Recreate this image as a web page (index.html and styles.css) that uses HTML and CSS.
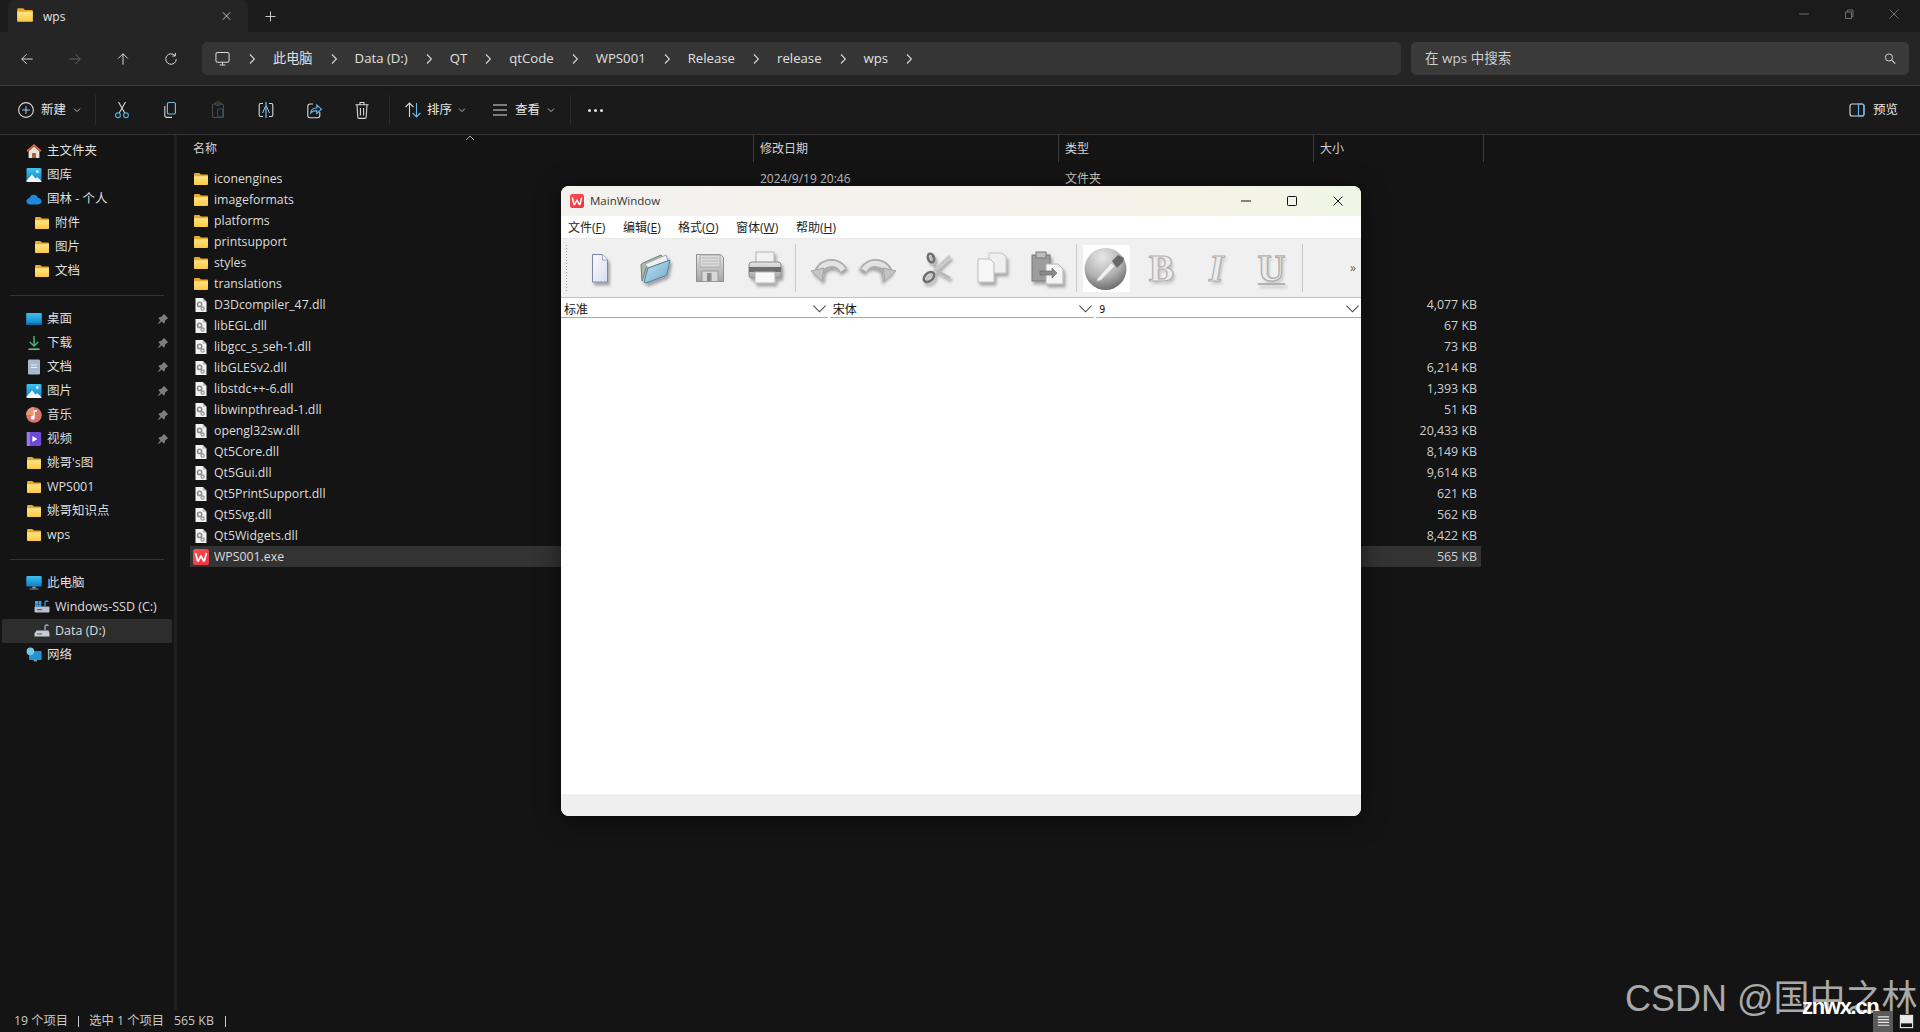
FILE: index.html
```html
<!DOCTYPE html>
<html lang="zh-CN">
<head>
<meta charset="utf-8">
<title>wps</title>
<link rel="stylesheet" href="styles.css">
</head>
<body>
<svg class="defs" width="0" height="0" aria-hidden="true">
  <defs>
    <linearGradient id="gFolder" x1="0" y1="0" x2="0" y2="1"><stop offset="0" stop-color="#ffe48a"/><stop offset="1" stop-color="#fcc93f"/></linearGradient>
    <linearGradient id="gBlue" x1="0" y1="0" x2="0" y2="1"><stop offset="0" stop-color="#3fc1f0"/><stop offset="1" stop-color="#0f7fc4"/></linearGradient>
    <linearGradient id="gWps" x1="0" y1="0" x2="1" y2="1"><stop offset="0" stop-color="#f9534f"/><stop offset="1" stop-color="#ee3045"/></linearGradient>
    <linearGradient id="gGrey" x1="0" y1="0" x2="0" y2="1"><stop offset="0" stop-color="#e6e6e6"/><stop offset="1" stop-color="#a4a4a4"/></linearGradient>
    <linearGradient id="gPage" x1="0" y1="0" x2="1" y2="1"><stop offset="0" stop-color="#fbfbff"/><stop offset="1" stop-color="#d8dcf0"/></linearGradient>
    <linearGradient id="gOpen" x1="0" y1="0" x2="1" y2="1"><stop offset="0" stop-color="#c6e4ee"/><stop offset="1" stop-color="#6aa8cf"/></linearGradient>
    <radialGradient id="gSphere" cx=".42" cy=".22" r=".85"><stop offset="0" stop-color="#e8e8e8"/><stop offset=".55" stop-color="#b2b2b2"/><stop offset="1" stop-color="#5f5f5f"/></radialGradient>
    <filter id="fShadow" x="-30%" y="-30%" width="160%" height="170%"><feDropShadow dx="2" dy="3" stdDeviation="1.6" flood-color="#000" flood-opacity=".32"/></filter>

    <symbol id="i-folder" viewBox="0 0 16 16"><path d="M1 3.2C1 2.5 1.5 2 2.2 2h3.6c.4 0 .7.1 1 .4L8 3.6h6c.6 0 1 .4 1 1V6H1z" fill="#e9a92a"/><path d="M1 5.2h14V13c0 .6-.4 1-1 1H2c-.6 0-1-.4-1-1z" fill="url(#gFolder)"/></symbol>
    <symbol id="i-dll" viewBox="0 0 16 16"><path d="M2.5 1h7.3L13.5 4.7V15h-11z" fill="#f2f2f2"/><path d="M9.8 1v3.7h3.7z" fill="#bdbdbd"/><circle cx="6.6" cy="7.4" r="2.1" fill="none" stroke="#8b8b8b" stroke-width="1.5"/><circle cx="9.6" cy="11.6" r="1.6" fill="none" stroke="#9a9a9a" stroke-width="1.3"/></symbol>
    <symbol id="i-wps" viewBox="0 0 16 16"><rect width="16" height="16" rx="2.6" fill="url(#gWps)"/><path d="M2.6 4l1.9 7.6c.2.6.8.6 1 .1L8 7l2.5 4.7c.2.5.8.5 1-.1L13.4 4" fill="none" stroke="#fff" stroke-width="1.7" stroke-linejoin="round"/></symbol>
    <symbol id="i-home" viewBox="0 0 16 16"><path d="M8 1L.5 7.6l1.1 1.1L8 3.2l6.4 5.5 1.1-1.1z" fill="#e8633d"/><path d="M2.6 8.2L8 3.6l5.4 4.6V15H10v-4.6H6V15H2.6z" fill="#e8e4dc"/><rect x="6" y="10.4" width="4" height="4.6" fill="#a8643c"/></symbol>
    <symbol id="i-pics" viewBox="0 0 16 16"><rect x=".5" y="1" width="15" height="14" rx="1.4" fill="url(#gBlue)"/><path d="M.5 13.6L6 7.4l3.6 4 1.6-1.4 4.3 4.2v.4c0 .3-.3.4-.6.4H1.4c-.5 0-.9-.2-.9-1.4z" fill="#f4f8fc"/><circle cx="11.4" cy="4.6" r="1.3" fill="#fff"/></symbol>
    <symbol id="i-cloud" viewBox="0 0 16 16"><path d="M4 13.4C2 13.4.4 12 .4 10.2S2 7 3.6 7c.6-2 2.3-3.2 4.2-3.2 2.1 0 3.8 1.3 4.3 3.3 1.9.1 3.5 1.4 3.5 3.2s-1.5 3.1-3.5 3.1z" fill="#1f87dd"/></symbol>
    <symbol id="i-desk" viewBox="0 0 16 16"><rect x=".2" y="2" width="15.6" height="12" rx="1" fill="url(#gBlue)"/><rect x=".2" y="12" width="15.6" height="2" fill="#0c6aa8"/></symbol>
    <symbol id="i-down" viewBox="0 0 16 16"><path d="M8 1v9.6M3.8 7L8 11l4.2-4" fill="none" stroke="#3fb37f" stroke-width="1.5"/><path d="M2.5 14.2h11" stroke="#6fc6a0" stroke-width="1.5"/></symbol>
    <symbol id="i-docs" viewBox="0 0 16 16"><rect x="2" y="0.5" width="12" height="15" rx="1.2" fill="#a9b8cc"/><rect x="5" y="5.5" width="6" height="1" fill="#e8eef6"/><rect x="5" y="8" width="6" height="1" fill="#e8eef6"/></symbol>
    <symbol id="i-music" viewBox="0 0 16 16"><circle cx="8" cy="8" r="7.8" fill="#d9756a"/><path d="M0 8a8 8 0 0 1 8-8v8z" fill="#e79a6f"/><path d="M7.6 3.6l3.4-.8v1.6l-2.2.5V10.6a2 2 0 1 1-1.2-1.8z" fill="#fff"/></symbol>
    <symbol id="i-video" viewBox="0 0 16 16"><rect x=".8" y="1" width="14.4" height="14" rx="1.4" fill="#6c4bd6"/><rect x=".8" y="1" width="3" height="14" fill="#9a7be8"/><path d="M6.4 5l5 3-5 3z" fill="#fff"/></symbol>
    <symbol id="i-pc" viewBox="0 0 16 16"><rect x=".3" y="1" width="15.4" height="10.6" rx="1" fill="url(#gBlue)"/><rect x="6.4" y="11.6" width="3.2" height="2" fill="#8d99a6"/><rect x="3.6" y="13.4" width="8.8" height="1.2" fill="#6f7b88"/></symbol>
    <symbol id="i-win" viewBox="0 0 16 16"><rect x=".5" y="7.5" width="15" height="6" rx="1" fill="#b9c2cc"/><rect x="1" y="2" width="3" height="3" fill="#37a0ea"/><rect x="4.4" y="2" width="3" height="3" fill="#37a0ea"/><rect x="1" y="5.2" width="3" height="2.6" fill="#37a0ea"/><rect x="4.4" y="5.2" width="3" height="2.6" fill="#37a0ea"/><rect x="3" y="10" width="5" height="1.2" fill="#55606c"/><path d="M11 7V3.4a1.7 1.7 0 0 1 3.3-.4" fill="none" stroke="#4aa4e0" stroke-width="1.2"/></symbol>
    <symbol id="i-drive" viewBox="0 0 16 16"><path d="M2.5 7.5h12l1 3V13.5H.5v-3z" fill="#c6ccd2"/><rect x="3" y="10.4" width="5" height="1.1" fill="#55606c"/><path d="M11 7V3.4a1.7 1.7 0 0 1 3.3-.4" fill="none" stroke="#b4bcc4" stroke-width="1.2"/></symbol>
    <symbol id="i-net" viewBox="0 0 16 16"><rect x="3" y="4" width="12.6" height="9" rx="1" fill="#1f93d3"/><rect x="7.6" y="13" width="3.4" height="1.4" fill="#8d99a6"/><circle cx="4.4" cy="4.4" r="3.8" fill="#74c6ec"/></symbol>
    <symbol id="i-pin" viewBox="0 0 12 12"><path d="M6.8.8l4.4 4.4-1 .5-2.2 2.1-.3 2.2-1 .6-1.9-2L1.6 11 1 10.4l2.4-3.2L1.5 5.3l.6-1 2.2-.3L6.3 1.8z" fill="#7e7e7e"/></symbol>
    <symbol id="i-chev" viewBox="0 0 8 12"><path d="M2 1.5L6.4 6 2 10.5" fill="none" stroke="#d8d8d8" stroke-width="1.1"/></symbol>
    <symbol id="i-down-small" viewBox="0 0 8 8"><path d="M1 2.6L4 5.6 7 2.6" fill="none" stroke="#b8b8b8" stroke-width="1"/></symbol>
    <symbol id="i-combo" viewBox="0 0 16 10"><path d="M1.5 1.5L8 8l6.5-6.5" fill="none" stroke="#444" stroke-width="1.1"/></symbol>
    <symbol id="i-arc" viewBox="0 0 48 48"><path d="M16 31c1-11 17-17 25-5" fill="none" stroke="#ababab" stroke-width="9"/><path d="M16 31c1-11 17-17 25-5" fill="none" stroke="#e2e2e2" stroke-width="5.5"/><path d="M9 27l11 10 2-13z" fill="#c4c4c4" stroke="#a2a2a2"/></symbol>
  </defs>
</svg>

<div class="app">
  <header class="tabbar">
    <div class="tab">
      <svg class="tab-icon"><use href="#i-folder"/></svg>
      <span class="tab-title">wps</span>
      <svg class="tab-close" viewBox="0 0 10 10"><path d="M1 1l8 8M9 1l-8 8" stroke="#d8d8d8" stroke-width="1"/></svg>
    </div>
    <svg class="tab-add" viewBox="0 0 12 12"><path d="M6 .5v11M.5 6h11" stroke="#d8d8d8" stroke-width="1"/></svg>
    <div class="win-controls">
      <svg viewBox="0 0 10 10"><path d="M0 5h10" stroke="#6f6f6f"/></svg>
      <svg viewBox="0 0 10 10"><path d="M1.5 3h6v6.5h-6zM3.5 3V1h5.5v6.5H7.5" fill="none" stroke="#6f6f6f"/></svg>
      <svg viewBox="0 0 10 10"><path d="M.5.5l9 9M9.5.5l-9 9" stroke="#6f6f6f"/></svg>
    </div>
  </header>

  <nav class="navbar">
    <div class="nav-btns">
      <button class="nav-btn"><svg viewBox="0 0 16 16"><path d="M14.5 8H2M7.5 2.5L2 8l5.5 5.5" fill="none" stroke="#dcdcdc" stroke-width="1.1"/></svg></button>
      <button class="nav-btn"><svg viewBox="0 0 16 16"><path d="M1.5 8H14M8.5 2.5L14 8l-5.5 5.5" fill="none" stroke="#666" stroke-width="1.1"/></svg></button>
      <button class="nav-btn"><svg viewBox="0 0 16 16"><path d="M8 14.5V2M2.5 7.5L8 2l5.5 5.5" fill="none" stroke="#dcdcdc" stroke-width="1.1"/></svg></button>
      <button class="nav-btn"><svg viewBox="0 0 16 16"><path d="M12.6 4.2A6 6 0 1 0 14 8M13 1v3.6H9.4" fill="none" stroke="#dcdcdc" stroke-width="1.1"/></svg></button>
    </div>
    <div class="address">
      <svg class="pc-outline" viewBox="0 0 16 16"><rect x="1" y="1" width="14" height="10.5" rx="1.6" fill="none" stroke="#d8d8d8" stroke-width="1.1"/><path d="M5 14.5h6M8 11.5v3" stroke="#d8d8d8" stroke-width="1.1"/></svg>
      <svg class="chev"><use href="#i-chev"/></svg><span>此电脑</span>
      <svg class="chev"><use href="#i-chev"/></svg><span>Data (D:)</span>
      <svg class="chev"><use href="#i-chev"/></svg><span>QT</span>
      <svg class="chev"><use href="#i-chev"/></svg><span>qtCode</span>
      <svg class="chev"><use href="#i-chev"/></svg><span>WPS001</span>
      <svg class="chev"><use href="#i-chev"/></svg><span>Release</span>
      <svg class="chev"><use href="#i-chev"/></svg><span>release</span>
      <svg class="chev"><use href="#i-chev"/></svg><span>wps</span>
      <svg class="chev"><use href="#i-chev"/></svg>
    </div>
    <div class="search">
      <span>在 wps 中搜索</span>
      <svg viewBox="0 0 14 14"><circle cx="5.8" cy="5.8" r="4.2" fill="none" stroke="#d8d8d8" stroke-width="1.1"/><path d="M9 9l4 4" stroke="#d8d8d8" stroke-width="1.3"/></svg>
    </div>
  </nav>

  <div class="cmdbar">
    <div class="cmd-text cmd-new">
      <svg class="ic18" viewBox="0 0 18 18"><circle cx="9" cy="9" r="7.4" fill="none" stroke="#dadada" stroke-width="1.1"/><path d="M9 5.2v7.6M5.2 9h7.6" stroke="#8fc8ee" stroke-width="1.1"/></svg>
      <span>新建</span><svg class="cmd-caret"><use href="#i-down-small"/></svg>
    </div>
    <i class="cmd-sep"></i>
    <button class="cmd-btn"><svg class="ic18" viewBox="0 0 18 18"><path d="M5.5 1l6.3 11M12.5 1L6.2 12" stroke="#d8d8d8" stroke-width="1.1" fill="none"/><circle cx="5" cy="14.2" r="2.4" fill="none" stroke="#4aa6e0" stroke-width="1.2"/><circle cx="13" cy="14.2" r="2.4" fill="none" stroke="#4aa6e0" stroke-width="1.2"/></svg></button>
    <button class="cmd-btn"><svg class="ic18" viewBox="0 0 18 18"><rect x="6.4" y="1.5" width="8" height="11.5" rx="1.6" fill="none" stroke="#6db8ea" stroke-width="1.2"/><path d="M3.8 5v9.2c0 1.2.8 2.2 2.2 2.2h5" fill="none" stroke="#d8d8d8" stroke-width="1.1"/></svg></button>
    <button class="cmd-btn"><svg class="ic18" viewBox="0 0 18 18"><rect x="3.5" y="3" width="11" height="13.5" rx="1.4" fill="none" stroke="#4c4c4c" stroke-width="1.1"/><rect x="6.5" y="1" width="5" height="3.4" rx="1" fill="none" stroke="#4c4c4c"/><rect x="8.6" y="8" width="5" height="8" fill="none" stroke="#37515f"/></svg></button>
    <button class="cmd-btn"><svg class="ic18" viewBox="0 0 18 18"><path d="M6 2.5H3.6c-.8 0-1.4.6-1.4 1.4v10.2c0 .8.6 1.4 1.4 1.4H6M12 2.5h2.4c.8 0 1.4.6 1.4 1.4v10.2c0 .8-.6 1.4-1.4 1.4H12" fill="none" stroke="#d8d8d8" stroke-width="1.1"/><path d="M9 1v16" stroke="#6db8ea" stroke-width="1.2"/><path d="M5.6 12L8.4 5.4h1.2L12.4 12" fill="none" stroke="#8fc8ee"/></svg></button>
    <button class="cmd-btn"><svg class="ic18" viewBox="0 0 18 18"><path d="M8 3H5C3.7 3 2.8 4 2.8 5.2v9.4c0 1.2.9 2.2 2.2 2.2h7.6c1.2 0 2.2-1 2.2-2.2V11" fill="none" stroke="#d8d8d8" stroke-width="1.1"/><path d="M5.8 12c.2-3 2.4-5 6-5V4l4.6 4.2-4.6 4.2V9.6c-2.4 0-4.6.6-6 2.4z" fill="none" stroke="#6db8ea" stroke-width="1.1"/></svg></button>
    <button class="cmd-btn"><svg class="ic18" viewBox="0 0 18 18"><path d="M2.4 3.8h13.2M7 3.6V1.5h4v2.1M4 4l.8 12c0 .8.6 1.4 1.4 1.4h5.6c.8 0 1.4-.6 1.4-1.4L14 4M7.4 7v7.4M10.6 7v7.4" fill="none" stroke="#d8d8d8" stroke-width="1.1"/></svg></button>
    <i class="cmd-sep sep-b"></i>
    <div class="cmd-text cmd-sort">
      <svg class="ic18" viewBox="0 0 18 18"><path d="M5.5 16V2M1.6 6l3.9-4 3.9 4" fill="none" stroke="#d8d8d8" stroke-width="1.1"/><path d="M12.5 2v14M8.6 12l3.9 4 3.9-4" fill="none" stroke="#6db8ea" stroke-width="1.1"/></svg>
      <span>排序</span><svg class="cmd-caret"><use href="#i-down-small"/></svg>
    </div>
    <div class="cmd-text cmd-view">
      <svg class="ic18" viewBox="0 0 18 18"><path d="M2 4h14M2 9h14M2 14h14" stroke="#dcdcdc" stroke-width="1.1"/></svg>
      <span>查看</span><svg class="cmd-caret"><use href="#i-down-small"/></svg>
    </div>
    <i class="cmd-sep sep-c"></i>
    <div class="cmd-dots"><i></i><i></i><i></i></div>
    <div class="cmd-text cmd-preview">
      <svg class="ic16" viewBox="0 0 16 16"><rect x="1" y="2" width="14" height="12" rx="2" fill="none" stroke="#d8d8d8" stroke-width="1.1"/><path d="M9.5 2H13c1.1 0 2 .9 2 2v8c0 1.1-.9 2-2 2H9.5z" fill="none" stroke="#6db8ea" stroke-width="1.1"/></svg>
      <span>预览</span>
    </div>
  </div>

  <main class="main">
    <aside class="sidebar">
      <div class="s-item"><svg class="ic16"><use href="#i-home"/></svg><span>主文件夹</span></div>
      <div class="s-item"><svg class="ic16"><use href="#i-pics"/></svg><span>图库</span></div>
      <div class="s-item"><svg class="ic16"><use href="#i-cloud"/></svg><span>国林 - 个人</span></div>
      <div class="s-item lvl2"><svg class="ic16"><use href="#i-folder"/></svg><span>附件</span></div>
      <div class="s-item lvl2"><svg class="ic16"><use href="#i-folder"/></svg><span>图片</span></div>
      <div class="s-item lvl2"><svg class="ic16"><use href="#i-folder"/></svg><span>文档</span></div>
      <div class="s-sep"></div>
      <div class="s-item"><svg class="ic16"><use href="#i-desk"/></svg><span>桌面</span><svg class="pin"><use href="#i-pin"/></svg></div>
      <div class="s-item"><svg class="ic16"><use href="#i-down"/></svg><span>下载</span><svg class="pin"><use href="#i-pin"/></svg></div>
      <div class="s-item"><svg class="ic16"><use href="#i-docs"/></svg><span>文档</span><svg class="pin"><use href="#i-pin"/></svg></div>
      <div class="s-item"><svg class="ic16"><use href="#i-pics"/></svg><span>图片</span><svg class="pin"><use href="#i-pin"/></svg></div>
      <div class="s-item"><svg class="ic16"><use href="#i-music"/></svg><span>音乐</span><svg class="pin"><use href="#i-pin"/></svg></div>
      <div class="s-item"><svg class="ic16"><use href="#i-video"/></svg><span>视频</span><svg class="pin"><use href="#i-pin"/></svg></div>
      <div class="s-item"><svg class="ic16"><use href="#i-folder"/></svg><span>姚哥's图</span></div>
      <div class="s-item"><svg class="ic16"><use href="#i-folder"/></svg><span>WPS001</span></div>
      <div class="s-item"><svg class="ic16"><use href="#i-folder"/></svg><span>姚哥知识点</span></div>
      <div class="s-item"><svg class="ic16"><use href="#i-folder"/></svg><span>wps</span></div>
      <div class="s-sep"></div>
      <div class="s-item"><svg class="ic16"><use href="#i-pc"/></svg><span>此电脑</span></div>
      <div class="s-item lvl2"><svg class="ic16"><use href="#i-win"/></svg><span>Windows-SSD (C:)</span></div>
      <div class="s-item lvl2 active"><svg class="ic16"><use href="#i-drive"/></svg><span>Data (D:)</span></div>
      <div class="s-item"><svg class="ic16"><use href="#i-net"/></svg><span>网络</span></div>
    </aside>

    <section class="files">
      <div class="head">
        <div class="h-cell h-name">名称<svg class="sort-caret" viewBox="0 0 10 6"><path d="M1 5l4-4 4 4" fill="none" stroke="#a8a8a8"/></svg></div>
        <div class="h-cell">修改日期</div>
        <div class="h-cell">类型</div>
        <div class="h-cell">大小</div>
      </div>
      <div class="list">
        <div class="row"><div class="name"><svg class="ic16"><use href="#i-folder"/></svg>iconengines</div><div class="cell">2024/9/19 20:46</div><div class="cell">文件夹</div><div class="size"></div></div>
        <div class="row"><div class="name"><svg class="ic16"><use href="#i-folder"/></svg>imageformats</div></div>
        <div class="row"><div class="name"><svg class="ic16"><use href="#i-folder"/></svg>platforms</div></div>
        <div class="row"><div class="name"><svg class="ic16"><use href="#i-folder"/></svg>printsupport</div></div>
        <div class="row"><div class="name"><svg class="ic16"><use href="#i-folder"/></svg>styles</div></div>
        <div class="row"><div class="name"><svg class="ic16"><use href="#i-folder"/></svg>translations</div></div>
        <div class="row"><div class="name"><svg class="ic16"><use href="#i-dll"/></svg>D3Dcompiler_47.dll</div><div class="cell"></div><div class="cell"></div><div class="size">4,077 KB</div></div>
        <div class="row"><div class="name"><svg class="ic16"><use href="#i-dll"/></svg>libEGL.dll</div><div class="cell"></div><div class="cell"></div><div class="size">67 KB</div></div>
        <div class="row"><div class="name"><svg class="ic16"><use href="#i-dll"/></svg>libgcc_s_seh-1.dll</div><div class="cell"></div><div class="cell"></div><div class="size">73 KB</div></div>
        <div class="row"><div class="name"><svg class="ic16"><use href="#i-dll"/></svg>libGLESv2.dll</div><div class="cell"></div><div class="cell"></div><div class="size">6,214 KB</div></div>
        <div class="row"><div class="name"><svg class="ic16"><use href="#i-dll"/></svg>libstdc++-6.dll</div><div class="cell"></div><div class="cell"></div><div class="size">1,393 KB</div></div>
        <div class="row"><div class="name"><svg class="ic16"><use href="#i-dll"/></svg>libwinpthread-1.dll</div><div class="cell"></div><div class="cell"></div><div class="size">51 KB</div></div>
        <div class="row"><div class="name"><svg class="ic16"><use href="#i-dll"/></svg>opengl32sw.dll</div><div class="cell"></div><div class="cell"></div><div class="size">20,433 KB</div></div>
        <div class="row"><div class="name"><svg class="ic16"><use href="#i-dll"/></svg>Qt5Core.dll</div><div class="cell"></div><div class="cell"></div><div class="size">8,149 KB</div></div>
        <div class="row"><div class="name"><svg class="ic16"><use href="#i-dll"/></svg>Qt5Gui.dll</div><div class="cell"></div><div class="cell"></div><div class="size">9,614 KB</div></div>
        <div class="row"><div class="name"><svg class="ic16"><use href="#i-dll"/></svg>Qt5PrintSupport.dll</div><div class="cell"></div><div class="cell"></div><div class="size">621 KB</div></div>
        <div class="row"><div class="name"><svg class="ic16"><use href="#i-dll"/></svg>Qt5Svg.dll</div><div class="cell"></div><div class="cell"></div><div class="size">562 KB</div></div>
        <div class="row"><div class="name"><svg class="ic16"><use href="#i-dll"/></svg>Qt5Widgets.dll</div><div class="cell"></div><div class="cell"></div><div class="size">8,422 KB</div></div>
        <div class="row selected"><div class="name"><svg class="ic16"><use href="#i-wps"/></svg>WPS001.exe</div><div class="cell"></div><div class="cell"></div><div class="size">565 KB</div></div>
      </div>
    </section>
  </main>

  <footer class="status">
    <span>19 个项目</span><i class="bar"></i><span>选中 1 个项目</span><span class="status-size">565 KB</span><i class="bar"></i>
  </footer>
</div>

<div class="qt-window">
  <div class="qt-title">
    <svg class="qt-logo"><use href="#i-wps"/></svg>
    <span class="qt-name">MainWindow</span>
    <div class="qt-controls">
      <svg viewBox="0 0 12 12"><path d="M1 6h10" stroke="#111" stroke-width="1"/></svg>
      <svg viewBox="0 0 12 12"><rect x="1.5" y="1.5" width="9" height="9" rx=".8" fill="none" stroke="#111" stroke-width="1"/></svg>
      <svg viewBox="0 0 12 12"><path d="M1.5 1.5l9 9M10.5 1.5l-9 9" stroke="#111" stroke-width="1"/></svg>
    </div>
  </div>
  <div class="qt-menu">
    <span class="m1">文件(<u>F</u>)</span>
    <span class="m2">编辑(<u>E</u>)</span>
    <span class="m3">格式(<u>O</u>)</span>
    <span class="m4">窗体(<u>W</u>)</span>
    <span class="m5">帮助(<u>H</u>)</span>
  </div>
  <div class="qt-toolbar">
    <div class="grip"></div>
    <div class="tb"><svg class="tb-svg" viewBox="0 0 48 48"><g filter="url(#fShadow)"><path d="M16.5 10.5h10l5 5.500v22h-15z" fill="url(#gPage)" stroke="#7d86a8"/><path d="M26.5 10.5V16h5" fill="#fff" stroke="#9aa2c0"/></g></svg></div>
    <div class="tb"><svg class="tb-svg" viewBox="0 0 48 48"><g filter="url(#fShadow)"><path d="M11 37L10 21c0-1 1-1.600 2-2l18-8 2 2-16 8z" fill="#aeb9a8" stroke="#6d7f85"/><path d="M14 20l21-9 2 6-20 7z" fill="#f4eef0" stroke="#9aa"/><path d="M13 38l4-14 22-8-3 14c-.3 1-1 1.600-2 2L15 39z" fill="url(#gOpen)" stroke="#4e7f9a"/></g></svg></div>
    <div class="tb"><svg class="tb-svg" viewBox="0 0 48 48"><path d="M10.500 10.500h24l3 3v24h-27z" fill="url(#gGrey)" stroke="#8f8f8f"/><rect x="14" y="11" width="20" height="12" fill="#dcdcdc" stroke="#aaa"/><path d="M16 14h16M16 17h16M16 20h16" stroke="#b8b8b8"/><rect x="16" y="27" width="16" height="10.500" fill="#d8d8d8" stroke="#999"/><rect x="21" y="29" width="4.500" height="8" fill="#8a8a8a"/></svg></div>
    <div class="tb"><svg class="tb-svg" viewBox="0 0 48 48"><g filter="url(#fShadow)"><rect x="15" y="8" width="18" height="12" fill="#f2f2f2" stroke="#b4b4b4"/><rect x="8" y="18" width="32" height="16" rx="3" fill="url(#gGrey)" stroke="#8a8a8a"/><rect x="8" y="23" width="32" height="5" fill="#6e6e6e"/><rect x="14" y="28" width="20" height="11" fill="#f8f8f8" stroke="#b4b4b4"/></g></svg></div>
    <i class="tb-sep"></i>
    <div class="tb"><svg class="tb-svg" filter="url(#fShadow)"><use href="#i-arc"/></svg></div>
    <div class="tb"><svg class="tb-svg flip" filter="url(#fShadow)"><use href="#i-arc"/></svg></div>
    <div class="tb"><svg class="tb-svg" viewBox="0 0 48 48"><g filter="url(#fShadow)"><path d="M19 12l6 15 13 7" fill="none" stroke="#b8b8b8" stroke-width="3"/><path d="M38 12L22 27" fill="none" stroke="#c8c8c8" stroke-width="3.500"/><ellipse cx="17" cy="33" rx="4" ry="6" transform="rotate(50 17 33)" fill="none" stroke="#6e6e6e" stroke-width="2.500"/><ellipse cx="19" cy="14" rx="3" ry="4.500" transform="rotate(-20 19 14)" fill="none" stroke="#6e6e6e" stroke-width="2.500"/></g></svg></div>
    <div class="tb"><svg class="tb-svg" viewBox="0 0 48 48"><g filter="url(#fShadow)"><path d="M22 9h13l4 4v16H22z" fill="#efefef" stroke="#c4c4c4"/><path d="M11 15h12l4 4v19H11z" fill="#f6f6f6" stroke="#bebebe"/></g></svg></div>
    <div class="tb"><svg class="tb-svg" viewBox="0 0 48 48"><g filter="url(#fShadow)"><rect x="10" y="11" width="18" height="26" fill="#9c9c9c" stroke="#777"/><rect x="14" y="8" width="10" height="6" fill="#bdbdbd" stroke="#777"/><path d="M24 20h12l5 5v15H24z" fill="#f4f4f4" stroke="#b4b4b4"/><path d="M18 27h12v-3l5 5-5 5v-3H18z" fill="#8a8a8a" stroke="#666" stroke-width=".6"/></g></svg></div>
    <i class="tb-sep"></i>
    <div class="tb tb-active"><svg class="tb-svg" viewBox="0 0 48 48"><circle cx="22.500" cy="25" r="21" fill="url(#gSphere)"/><path d="M15 34l13-15 4 3-14 14-4 1z" fill="#f0f0f0" stroke="#c8c8c8"/><path d="M29 17l6-6 6 3-1 4-6 6z" fill="#686868"/></svg></div>
    <div class="tb"><span class="glyph">B</span></div>
    <div class="tb"><span class="glyph glyph-i">I</span></div>
    <div class="tb"><span class="glyph glyph-u">U</span></div>
    <i class="tb-sep"></i>
    <span class="tb-more">»</span>
  </div>
  <div class="qt-combos">
    <div class="combo c1"><span>标准</span><svg><use href="#i-combo"/></svg></div>
    <div class="combo c2"><span>宋体</span><svg><use href="#i-combo"/></svg></div>
    <div class="combo c3"><span class="combo-num">9</span><svg><use href="#i-combo"/></svg></div>
  </div>
  <div class="qt-body"></div>
  <div class="qt-status"></div>
</div>

<div class="watermark">CSDN @国中之林</div>
<div class="wm-site">znwx.cn</div>
<div class="view-toggle">
  <span class="vt vt-on"><svg viewBox="0 0 16 16"><path d="M2 3h12M2 6h12M2 9h12M2 12h12" stroke="#e8e8e8" stroke-width="1.2"/></svg></span>
  <span class="vt"><svg viewBox="0 0 16 16"><rect x="1.5" y="1.5" width="13" height="13" fill="none" stroke="#e8e8e8" stroke-width="1.2"/><rect x="2" y="2" width="12" height="8" fill="#e8e8e8"/></svg></span>
</div>
</body>
</html>
```

FILE: styles.css
```css
* { box-sizing: border-box; }
html, body { margin: 0; padding: 0; }
body {
  position: relative;
  width: 1920px;
  height: 1032px;
  overflow: hidden;
  background: #141414;
  color: #dcdcdc;
  font: 12.3px/1 "Open Sans", "Noto Sans CJK SC", sans-serif;
}
.defs { position: absolute; }
svg { display: block; flex: none; }
button { background: none; border: 0; padding: 0; display: flex; align-items: center; justify-content: center; }
.ic16 { width: 16px; height: 16px; }
.ic18 { width: 18px; height: 18px; }

.app { display: flex; flex-direction: column; height: 1032px; }

/* tabs */
.tabbar { height: 32px; background: #1b1b1b; display: flex; align-items: center; padding-left: 8px; }
.tab { width: 240px; height: 32px; background: #242424; border-radius: 6px 6px 0 0; display: flex; align-items: center; padding-left: 8px; }
.tab-icon { width: 18px; height: 18px; margin-top: -2px; }
.tab-title { margin-left: 9px; padding-top: 2px; color: #e4e4e4; font-size: 12px; }
.tab-close { width: 9px; height: 10px; margin-left: auto; margin-right: 17px; }
.tab-add { width: 11px; height: 11px; margin-left: 17px; }
.win-controls { margin-left: auto; display: flex; gap: 35px; padding-right: 21px; margin-top: -4px; }
.win-controls svg { width: 10px; height: 10px; }

/* nav */
.navbar { height: 54px; background: #252525; border-bottom: 1px solid #3d3d3d; display: flex; align-items: center; padding: 0 11px 0 3px; }
.nav-btns { display: flex; width: 199px; }
.nav-btn { width: 48px; height: 32px; }
.nav-btn svg { width: 14px; height: 14px; }
.address { flex: 1; height: 33px; background: #353535; border-radius: 5px; display: flex; align-items: center; padding-left: 13px; gap: 17px; color: #e0e0e0; font-size: 13.2px; }
.pc-outline { width: 15px; height: 16px; margin-right: 1px; }
.chev { width: 8px; height: 12px; }
.search { width: 498px; height: 33px; margin-left: 10px; background: #3a3a3a; border-radius: 5px; display: flex; align-items: center; padding: 0 13px 0 14px; justify-content: space-between; color: #cfcfcf; font-size: 13.5px; }
.search svg { width: 12px; height: 13px; }

/* command bar */
.cmdbar { height: 49px; background: #1a1a1a; border-bottom: 1px solid #333; display: flex; align-items: center; padding-left: 17px; font-size: 12.5px; }
.cmd-text { display: flex; align-items: center; gap: 6px; color: #e4e4e4; }
.cmd-new { width: 78px; }
.cmd-caret { width: 8px; height: 8px; margin-left: 1px; }
.cmd-sep { width: 1px; height: 30px; background: #2c2c2c; }
.cmd-btn { width: 48px; height: 32px; }
.cmd-sep + .cmd-btn { margin-left: 2px; }
.sep-b { margin-left: 3px; margin-right: 14px; }
.cmd-sort { width: 87px; gap: 5px; }
.cmd-view { width: 79px; }
.sep-c { margin-right: 17px; }
.cmd-dots { display: flex; gap: 3px; }
.cmd-dots i { width: 3px; height: 3px; border-radius: 50%; background: #e4e4e4; }
.cmd-preview { margin-left: auto; padding-right: 22px; gap: 8px; }

/* main */
.main { flex: 1; display: flex; min-height: 0; }
.sidebar { width: 177px; border-right: 3px solid #202020; padding: 4px 0 0 2px; }
.s-item { height: 24px; width: 170px; display: flex; align-items: center; padding-left: 24px; gap: 5px; font-size: 12.5px; color: #dedede; border-radius: 2px; }
.s-item.lvl2 { padding-left: 32px; }
.s-item.active { background: #2d2d2d; }
.pin { width: 12px; height: 12px; margin-left: auto; margin-right: 3px; }
.s-sep { height: 24px; width: 154px; margin-left: 8px; display: flex; align-items: center; }
.s-sep::before { content: ""; display: block; width: 100%; height: 1px; background: #333; }

.files { flex: 1; padding-left: 13px; min-width: 0; }
.head { height: 27px; display: flex; color: #d2d2d2; font-size: 12px; }
.h-cell { position: relative; padding: 8px 0 0 6px; border-right: 1px solid #3d3d3d; }
.h-cell:nth-child(1) { width: 564px; padding-left: 3px; }
.h-cell:nth-child(2) { width: 305px; }
.h-cell:nth-child(3) { width: 255px; }
.h-cell:nth-child(4) { width: 170px; }
.sort-caret { position: absolute; left: 275px; top: 0; width: 10px; height: 6px; }

.list { margin-top: 6px; width: 1291px; }
.row { height: 21px; display: grid; grid-template-columns: 564px 305px 255px 167px; align-items: center; color: #d8d8d8; }
.name { display: flex; align-items: center; gap: 5px; padding: 2px 0 0 3px; color: #dcdcdc; }
.name svg { margin-top: -2px; }
.cell { padding-left: 6px; font-size: 12px; color: #c8c8c8; }
.size { text-align: right; padding: 2px 4px 0 0; color: #cfcfcf; font-size: 12.4px; }
.selected { background: #333; }

.status { height: 22px; display: flex; align-items: center; padding: 1px 0 0 14px; font-size: 12.3px; color: #c8c8c8; flex: none; }
.bar { width: 1px; height: 11px; background: #c8c8c8; margin: 0 10px; }
.status-size { margin-left: 10px; }
.status .bar:last-child { margin-left: 11px; }

/* floating app window */
.qt-window { position: absolute; left: 561px; top: 186px; width: 800px; height: 630px; background: #fff; border-radius: 8px; box-shadow: 0 4px 24px rgba(0,0,0,.55); overflow: hidden; display: flex; flex-direction: column; color: #222; }
.qt-title { height: 30px; background: linear-gradient(90deg, #f3f2ef 0%, #f6f1ec 55%, #f5f2e6 80%, #eff6e6 100%); display: flex; align-items: center; padding-left: 9px; flex: none; }
.qt-logo { width: 14px; height: 14px; }
.qt-name { margin-left: 6px; font-size: 11.5px; color: #333; }
.qt-controls { margin-left: auto; display: flex; gap: 34px; padding-right: 17px; }
.qt-controls svg { width: 12px; height: 12px; }
.qt-menu { height: 22px; display: flex; align-items: center; font-size: 12px; color: #222; flex: none; padding: 2px 0 0 7px; }
.qt-menu span { display: block; }
.m1 { width: 55px; } .m2 { width: 55px; } .m3 { width: 58px; } .m4 { width: 60px; }
.qt-toolbar { height: 60px; background: #f0f0f0; border-top: 1px solid #eaeaea; border-bottom: 1px solid #bfbfbf; display: flex; align-items: center; flex: none; }
.grip { width: 11px; height: 48px; background: radial-gradient(circle, #9a9a9a 35%, transparent 40%) 4px 0 / 3px 3px repeat-y; }
.tb { width: 55px; height: 48px; display: flex; align-items: center; justify-content: center; }
.tb-svg { width: 48px; height: 48px; }
.flip { transform: scaleX(-1); }
.tb-active { background: linear-gradient(#fff,#fff) center / 47px 47px no-repeat; }
.tb-sep { width: 6px; height: 48px; position: relative; background: linear-gradient(#c8c8c8,#c8c8c8) center / 1px 100% no-repeat; }
.glyph { font: bold 38px/1 "Liberation Serif", serif; color: #ececec; -webkit-text-stroke: 1.2px #b0b0b0; text-shadow: 2px 3px 3px rgba(0,0,0,.18); }
.glyph-i { font-style: italic; }
.glyph-u { text-decoration: underline; text-decoration-thickness: 2px; text-underline-offset: 2px; text-decoration-color: #b0b0b0; }
.tb-more { margin-left: auto; padding-right: 5px; color: #666; font-size: 12px; }
.qt-combos { height: 20px; display: flex; gap: 1px; flex: none; background: #fff; padding-top: 2px; }
.combo { height: 18px; background: #fff; border-bottom: 1px solid #a8a8a8; display: flex; align-items: center; justify-content: space-between; padding: 0 1px 0 3px; font-size: 12px; color: #111; }
.combo span { padding-top: 2px; }
.combo svg { width: 15px; height: 10px; }
.c1 { width: 267px; } .c2 { width: 265px; margin-left: 1px; } .c3 { width: 265px; margin-left: 1px; }
.combo-num { font-family: "DejaVu Sans Mono", monospace; font-size: 10px; }
.qt-body { flex: 1; background: #fff; }
.qt-status { height: 22px; background: #efefef; border-top: 1px solid #f4f4f4; flex: none; }

/* overlays */
.watermark { position: absolute; left: 1625px; top: 981px; font: 36px/1 "Liberation Sans", "Noto Sans CJK SC", sans-serif; color: #a9a9a9; white-space: nowrap; }
.wm-site { position: absolute; left: 1802px; top: 996px; font: bold 22px/1 "Liberation Sans", sans-serif; letter-spacing: -1.3px; color: #fff; white-space: nowrap; }
.view-toggle { position: absolute; left: 1873px; top: 1011px; display: flex; gap: 3px; }
.vt { width: 20px; height: 21px; display: flex; align-items: center; justify-content: center; }
.vt svg { width: 15px; height: 15px; }
.vt-on { background: #5a5a5a; }
```
